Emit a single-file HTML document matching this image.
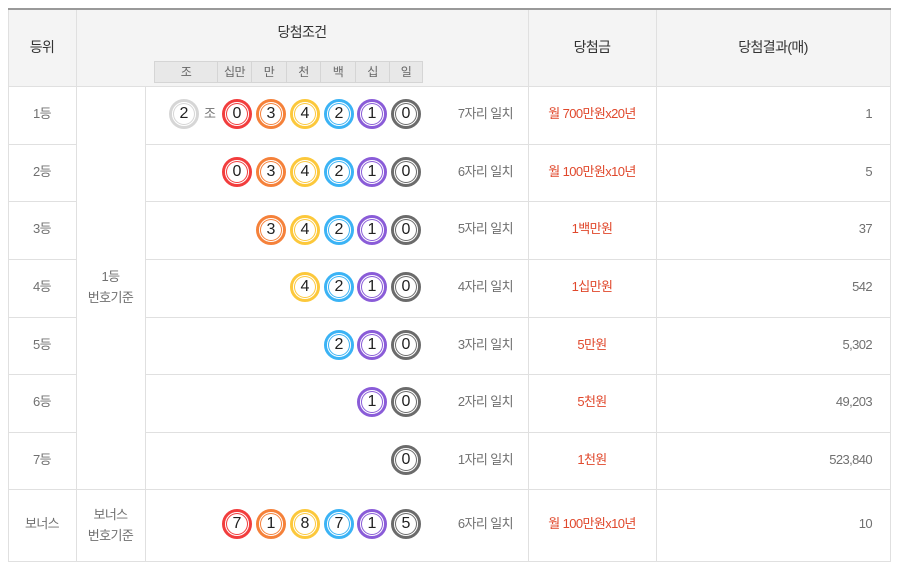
<!DOCTYPE html>
<html><head><meta charset="utf-8"><style>
*{margin:0;padding:0;box-sizing:border-box}
body{width:900px;height:568px;background:#fff;position:relative;overflow:hidden;font-family:"Liberation Sans","Noto Sans CJK KR",sans-serif;font-size:13px;color:#707070;letter-spacing:-0.6px}
.a{position:absolute}
.h{background:#f4f4f4}
.l{position:absolute;background:#e0e0e0}
.t{position:absolute;white-space:nowrap;line-height:16px}
.c{text-align:center}
.r{color:#e0482c}
.b{position:absolute;width:30px;height:30px;border-radius:50%;border:3px solid;background:#fff;text-align:center;line-height:24px;font-size:16px;color:#222;letter-spacing:0;font-weight:normal}
.b::after{content:"";position:absolute;left:0;top:0;right:0;bottom:0;border-radius:50%;box-shadow:inset 0 0 0 1px #fff,inset 0 0 0 2px var(--c)}
.sub{position:absolute;top:61px;height:22px;background:#e8e8e8;border:1px solid #d5d5d5;text-align:center;line-height:20px;font-size:12px;color:#666}
</style></head><body>
<div class="a h" style="left:8px;top:9px;width:883px;height:77px"></div>
<div class="a" style="left:8px;top:8px;width:883px;height:2px;background:#999"></div>
<div class="l" style="left:8px;top:86px;width:883px;height:1px"></div>
<div class="l" style="left:8px;top:144px;width:68px;height:1px"></div><div class="l" style="left:145px;top:144px;width:746px;height:1px"></div>
<div class="l" style="left:8px;top:201px;width:68px;height:1px"></div><div class="l" style="left:145px;top:201px;width:746px;height:1px"></div>
<div class="l" style="left:8px;top:259px;width:68px;height:1px"></div><div class="l" style="left:145px;top:259px;width:746px;height:1px"></div>
<div class="l" style="left:8px;top:317px;width:68px;height:1px"></div><div class="l" style="left:145px;top:317px;width:746px;height:1px"></div>
<div class="l" style="left:8px;top:374px;width:68px;height:1px"></div><div class="l" style="left:145px;top:374px;width:746px;height:1px"></div>
<div class="l" style="left:8px;top:432px;width:68px;height:1px"></div><div class="l" style="left:145px;top:432px;width:746px;height:1px"></div>
<div class="l" style="left:8px;top:489px;width:883px;height:1px"></div>
<div class="l" style="left:8px;top:561px;width:883px;height:1px"></div>
<div class="l" style="left:8px;top:10px;width:1px;height:552px"></div>
<div class="l" style="left:76px;top:10px;width:1px;height:552px"></div>
<div class="l" style="left:145px;top:86px;width:1px;height:476px"></div>
<div class="l" style="left:528px;top:10px;width:1px;height:552px"></div>
<div class="l" style="left:656px;top:10px;width:1px;height:552px"></div>
<div class="l" style="left:890px;top:10px;width:1px;height:552px"></div>
<div class="t c" style="left:8px;width:68px;top:39px;font-size:14px;color:#333">등위</div>
<div class="t c" style="left:76px;width:452px;top:24px;font-size:14px;color:#333">당첨조건</div>
<div class="t c" style="left:528px;width:128px;top:39px;font-size:14px;color:#333">당첨금</div>
<div class="t c" style="left:656px;width:234px;top:39px;font-size:14px;color:#333">당첨결과(매)</div>
<div class="sub" style="left:154px;width:64px">조</div>
<div class="sub" style="left:217px;width:35px">십만</div>
<div class="sub" style="left:251px;width:36px">만</div>
<div class="sub" style="left:286px;width:35px">천</div>
<div class="sub" style="left:320px;width:36px">백</div>
<div class="sub" style="left:355px;width:35px">십</div>
<div class="sub" style="left:389px;width:34px">일</div>
<div class="t c" style="left:8px;width:68px;top:106px">1등</div>
<div class="t c" style="left:8px;width:68px;top:164px">2등</div>
<div class="t c" style="left:8px;width:68px;top:221px">3등</div>
<div class="t c" style="left:8px;width:68px;top:279px">4등</div>
<div class="t c" style="left:8px;width:68px;top:337px">5등</div>
<div class="t c" style="left:8px;width:68px;top:394px">6등</div>
<div class="t c" style="left:8px;width:68px;top:452px">7등</div>
<div class="t c" style="left:8px;width:68px;top:516px">보너스</div>
<div class="t c" style="left:76px;width:69px;top:266px;line-height:21px">1등<br>번호기준</div>
<div class="t c" style="left:76px;width:69px;top:504px;line-height:21px">보너스<br>번호기준</div>
<div class="t" style="left:440px;width:73px;text-align:right;top:106px">7자리 일치</div>
<div class="t" style="left:440px;width:73px;text-align:right;top:164px">6자리 일치</div>
<div class="t" style="left:440px;width:73px;text-align:right;top:221px">5자리 일치</div>
<div class="t" style="left:440px;width:73px;text-align:right;top:279px">4자리 일치</div>
<div class="t" style="left:440px;width:73px;text-align:right;top:337px">3자리 일치</div>
<div class="t" style="left:440px;width:73px;text-align:right;top:394px">2자리 일치</div>
<div class="t" style="left:440px;width:73px;text-align:right;top:452px">1자리 일치</div>
<div class="t" style="left:440px;width:73px;text-align:right;top:516px">6자리 일치</div>
<div class="t c r" style="left:528px;width:128px;top:106px">월 700만원x20년</div>
<div class="t c r" style="left:528px;width:128px;top:164px">월 100만원x10년</div>
<div class="t c r" style="left:528px;width:128px;top:221px">1백만원</div>
<div class="t c r" style="left:528px;width:128px;top:279px">1십만원</div>
<div class="t c r" style="left:528px;width:128px;top:337px">5만원</div>
<div class="t c r" style="left:528px;width:128px;top:394px">5천원</div>
<div class="t c r" style="left:528px;width:128px;top:452px">1천원</div>
<div class="t c r" style="left:528px;width:128px;top:516px">월 100만원x10년</div>
<div class="t" style="left:700px;width:172px;text-align:right;top:106px">1</div>
<div class="t" style="left:700px;width:172px;text-align:right;top:164px">5</div>
<div class="t" style="left:700px;width:172px;text-align:right;top:221px">37</div>
<div class="t" style="left:700px;width:172px;text-align:right;top:279px">542</div>
<div class="t" style="left:700px;width:172px;text-align:right;top:337px">5,302</div>
<div class="t" style="left:700px;width:172px;text-align:right;top:394px">49,203</div>
<div class="t" style="left:700px;width:172px;text-align:right;top:452px">523,840</div>
<div class="t" style="left:700px;width:172px;text-align:right;top:516px">10</div>
<div class="b" style="left:169px;top:99px;border-color:#d6d6d6;--c:#d6d6d6">2</div>
<div class="t" style="left:204px;top:106px">조</div>
<div class="b" style="left:222px;top:99px;border-color:#f23d3d;--c:#f23d3d">0</div>
<div class="b" style="left:256px;top:99px;border-color:#f5813a;--c:#f5813a">3</div>
<div class="b" style="left:290px;top:99px;border-color:#fcc83b;--c:#fcc83b">4</div>
<div class="b" style="left:324px;top:99px;border-color:#3bb3f5;--c:#3bb3f5">2</div>
<div class="b" style="left:357px;top:99px;border-color:#8a5cd8;--c:#8a5cd8">1</div>
<div class="b" style="left:391px;top:99px;border-color:#6b6b6b;--c:#6b6b6b">0</div>
<div class="b" style="left:222px;top:157px;border-color:#f23d3d;--c:#f23d3d">0</div>
<div class="b" style="left:256px;top:157px;border-color:#f5813a;--c:#f5813a">3</div>
<div class="b" style="left:290px;top:157px;border-color:#fcc83b;--c:#fcc83b">4</div>
<div class="b" style="left:324px;top:157px;border-color:#3bb3f5;--c:#3bb3f5">2</div>
<div class="b" style="left:357px;top:157px;border-color:#8a5cd8;--c:#8a5cd8">1</div>
<div class="b" style="left:391px;top:157px;border-color:#6b6b6b;--c:#6b6b6b">0</div>
<div class="b" style="left:256px;top:215px;border-color:#f5813a;--c:#f5813a">3</div>
<div class="b" style="left:290px;top:215px;border-color:#fcc83b;--c:#fcc83b">4</div>
<div class="b" style="left:324px;top:215px;border-color:#3bb3f5;--c:#3bb3f5">2</div>
<div class="b" style="left:357px;top:215px;border-color:#8a5cd8;--c:#8a5cd8">1</div>
<div class="b" style="left:391px;top:215px;border-color:#6b6b6b;--c:#6b6b6b">0</div>
<div class="b" style="left:290px;top:272px;border-color:#fcc83b;--c:#fcc83b">4</div>
<div class="b" style="left:324px;top:272px;border-color:#3bb3f5;--c:#3bb3f5">2</div>
<div class="b" style="left:357px;top:272px;border-color:#8a5cd8;--c:#8a5cd8">1</div>
<div class="b" style="left:391px;top:272px;border-color:#6b6b6b;--c:#6b6b6b">0</div>
<div class="b" style="left:324px;top:330px;border-color:#3bb3f5;--c:#3bb3f5">2</div>
<div class="b" style="left:357px;top:330px;border-color:#8a5cd8;--c:#8a5cd8">1</div>
<div class="b" style="left:391px;top:330px;border-color:#6b6b6b;--c:#6b6b6b">0</div>
<div class="b" style="left:357px;top:387px;border-color:#8a5cd8;--c:#8a5cd8">1</div>
<div class="b" style="left:391px;top:387px;border-color:#6b6b6b;--c:#6b6b6b">0</div>
<div class="b" style="left:391px;top:445px;border-color:#6b6b6b;--c:#6b6b6b">0</div>
<div class="b" style="left:222px;top:509px;border-color:#f23d3d;--c:#f23d3d">7</div>
<div class="b" style="left:256px;top:509px;border-color:#f5813a;--c:#f5813a">1</div>
<div class="b" style="left:290px;top:509px;border-color:#fcc83b;--c:#fcc83b">8</div>
<div class="b" style="left:324px;top:509px;border-color:#3bb3f5;--c:#3bb3f5">7</div>
<div class="b" style="left:357px;top:509px;border-color:#8a5cd8;--c:#8a5cd8">1</div>
<div class="b" style="left:391px;top:509px;border-color:#6b6b6b;--c:#6b6b6b">5</div>
</body></html>
